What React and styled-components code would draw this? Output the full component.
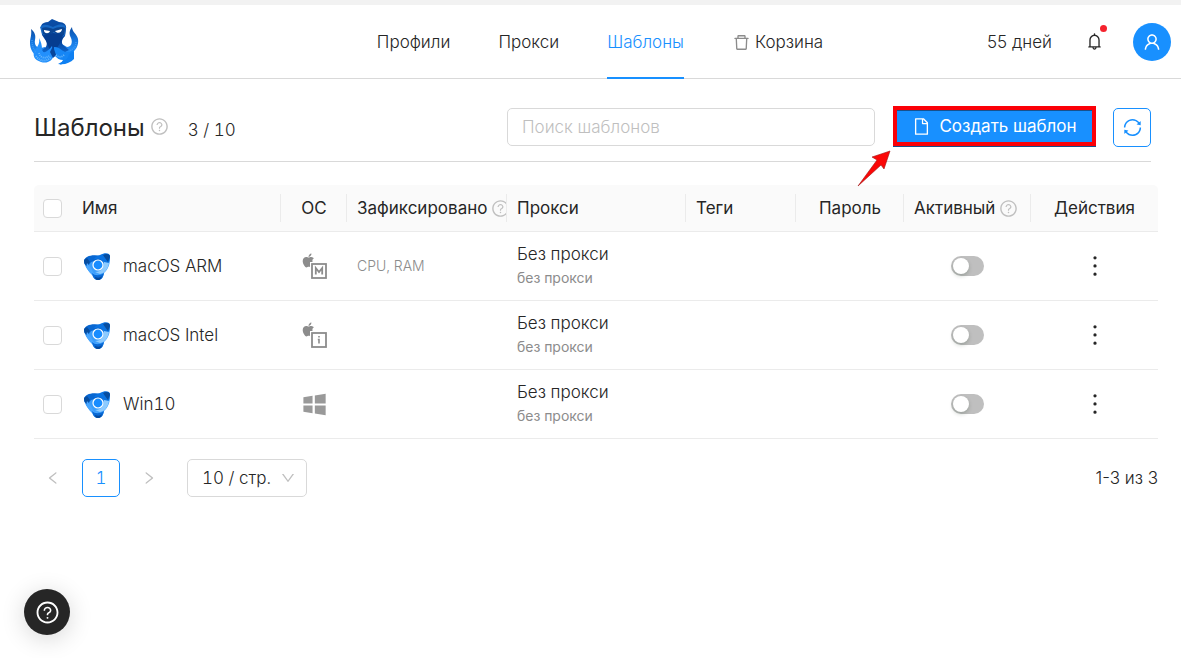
import React, { useState } from 'react';
import styled, { createGlobalStyle, css } from 'styled-components';
import {
  AiOutlineBell,
  AiOutlineDelete,
  AiOutlineDown,
  AiOutlineFile,
  AiOutlineLeft,
  AiOutlineMore,
  AiOutlineQuestionCircle,
  AiOutlineRight,
  AiOutlineSync,
  AiOutlineUser,
  AiFillApple,
  AiFillWindows,
} from 'react-icons/ai';

const GlobalStyle = createGlobalStyle`
  * { box-sizing: border-box; }

  body {
    margin: 0;
    background: #fff;
    color: #262626;
    font-family: Inter, "Liberation Sans", sans-serif;
    font-size: 17px;
    font-weight: 300;
    font-variant-numeric: tabular-nums;
    line-height: 24px;
  }

  button, input, select {
    font: inherit;
    font-variant-numeric: inherit;
    color: inherit;
  }

  button { cursor: pointer; }
  svg { display: block; flex: none; }
`;

const Header = styled.header`
  display: grid;
  grid-template-columns: 1fr auto 1fr;
  align-items: stretch;
  height: 79px;
  padding: 0 10px 0 29px;
  border-top: 5px solid #f2f2f2;
  border-bottom: 1px solid #d9d9d9;
`;

const LogoLink = styled.a`
  display: flex;
  align-items: center;
  justify-self: start;
`;

const Nav = styled.nav`
  display: flex;
  gap: 48px;
`;

const NavLink = styled.a`
  display: flex;
  align-items: center;
  gap: 4px;
  margin-bottom: -1px;
  padding-top: 2px;
  border-bottom: 2px solid transparent;
  color: inherit;
  text-decoration: none;

  svg { color: #8c8c8c; }

  ${props => props.$active && css`
    color: #1890ff;
    border-bottom-color: #1890ff;
  `}
`;

const Account = styled.div`
  display: flex;
  align-items: center;
  justify-self: end;
  font-variant-numeric: normal;
`;

const BellButton = styled.button`
  position: relative;
  display: flex;
  margin: 0 29px 0 33px;
  padding: 0;
  border: 0;
  background: none;

  &::after {
    content: '';
    position: absolute;
    top: -7px;
    right: -3px;
    width: 7px;
    height: 7px;
    border-radius: 50%;
    background: #f5222d;
  }
`;

const Avatar = styled.button`
  display: flex;
  align-items: center;
  justify-content: center;
  width: 38px;
  height: 38px;
  padding: 0;
  border: 0;
  border-radius: 50%;
  background: #1890ff;
  color: #fff;
`;

const Page = styled.main`
  padding: 27px 23px 0 34px;
`;

const Toolbar = styled.div`
  display: flex;
  align-items: center;
  margin-right: 7px;
  padding-bottom: 14px;
  border-bottom: 1px solid #d9d9d9;
`;

const Title = styled.h1`
  margin: 2px 5px 0 0;
  font-size: 24px;
  font-weight: 400;
  line-height: 32px;
`;

const HintIcon = styled(AiOutlineQuestionCircle)`
  width: 19px;
  height: 19px;
  color: #bfbfbf;
`;

const Counter = styled.span`
  margin: 6px auto 0 19px;
`;

const SearchInput = styled.input`
  width: 368px;
  height: 38px;
  margin-right: 18px;
  padding: 0 14px;
  border: 1px solid #d9d9d9;
  border-radius: 5px;
  outline: none;

  &::placeholder { color: #bfbfbf; opacity: 1; }
`;

const Highlight = styled.div`
  position: relative;
  margin: 0 17px 1px 0;
  border: 4px solid #fb0007;
  box-shadow: 0 1px 0 #17508c;
`;

const CreateButton = styled.button`
  display: flex;
  align-items: center;
  justify-content: center;
  gap: 8px;
  width: 195px;
  height: 32px;
  padding: 0;
  border: 0;
  background: #1890ff;
  box-shadow: inset 0 1px 0 #17508c;
  color: #fff;
  font-weight: 400;
`;

const Pointer = styled.svg`
  position: absolute;
  top: 40px;
  left: -42px;
  z-index: 1;
`;

const RefreshButton = styled.button`
  display: flex;
  align-items: center;
  justify-content: center;
  align-self: flex-end;
  width: 38px;
  height: 39px;
  padding: 0;
  border: 1px solid #1890ff;
  border-radius: 5px;
  background: #fff;
  color: #1890ff;
`;

const Table = styled.table`
  width: 100%;
  margin-top: 23px;
  border-collapse: separate;
  border-spacing: 0;
  table-layout: fixed;
`;

const Th = styled.th`
  height: 47px;
  padding: 0;
  border-bottom: 1px solid #ebebeb;
  background: #fafafa;
  font-weight: 400;
  text-align: left;

  &:first-child { border-top-left-radius: 5px; }
  &:last-child { border-top-right-radius: 5px; }
`;

const HeadCell = styled.div`
  display: flex;
  align-items: center;
  justify-content: ${props => (props.$center ? 'center' : 'flex-start')};
  gap: 4px;
  height: 28px;
  padding-left: ${props => (props.$center ? 1 : 10)}px;
  border-right: 1px solid ${props => (props.$divider ? '#ebebeb' : 'transparent')};
  overflow: hidden;
  white-space: nowrap;
`;

const Td = styled.td`
  height: 69px;
  padding: 0 0 0 ${props => (props.$center ? 0 : 10)}px;
  border-bottom: 1px solid #ebebeb;
`;

const Centered = styled.div`
  display: flex;
  justify-content: center;
  color: ${props => props.$color || 'inherit'};
`;

const Checkbox = styled.input`
  appearance: none;
  display: block;
  width: 19px;
  height: 19px;
  margin: 0 0 0 9px;
  border: 1px solid #d9d9d9;
  border-radius: 4px;
  background: #fff;

  &:checked { border-color: #1890ff; background: #1890ff; }
`;

const ProfileName = styled.div`
  display: flex;
  align-items: center;
  gap: 13px;
  padding-left: 2px;
`;

const Muted = styled.div`
  color: #8c8c8c;
  font-size: 14px;
  font-weight: ${props => props.$weight || 300};
  line-height: 24px;
`;

const Switch = styled.input`
  appearance: none;
  display: block;
  width: 33px;
  height: 20px;
  margin: 0;
  padding: 2px;
  border-radius: 10px;
  background: #bfbfbf;

  &::before {
    content: '';
    display: block;
    width: 16px;
    height: 16px;
    border-radius: 50%;
    background: #fff;
    box-shadow: 0 2px 4px rgba(0, 35, 11, 0.2);
  }

  &:checked { background: #1890ff; }
  &:checked::before { margin-left: auto; }
`;

const MoreButton = styled.button`
  display: flex;
  padding: 0;
  border: 0;
  background: none;
`;

const Footer = styled.footer`
  display: flex;
  align-items: center;
  margin-top: 20px;
`;

const PageButton = styled.button`
  display: flex;
  align-items: center;
  justify-content: center;
  width: 38px;
  height: 38px;
  margin-right: 10px;
  padding: 0;
  border: 1px solid ${props => (props.$active ? '#1890ff' : 'transparent')};
  border-radius: 5px;
  background: #fff;
  color: ${props => (props.$active ? '#1890ff' : '#bfbfbf')};
`;

const SelectBox = styled.div`
  position: relative;
  width: 120px;
  margin-left: 9px;

  svg {
    position: absolute;
    top: 11px;
    right: 11px;
    color: #bfbfbf;
    pointer-events: none;
  }
`;

const PageSize = styled.select`
  appearance: none;
  width: 100%;
  height: 38px;
  padding: 0 0 0 14px;
  border: 1px solid #d9d9d9;
  border-radius: 5px;
  background: #fff;
`;

const Total = styled.span`
  margin-left: auto;
  font-variant-numeric: normal;
`;

const HelpButton = styled.button`
  position: fixed;
  bottom: 23px;
  left: 24px;
  display: flex;
  align-items: center;
  justify-content: center;
  width: 46px;
  height: 46px;
  padding: 0;
  border: 0;
  border-radius: 50%;
  background: #262626;
  color: #fff;
  box-shadow: 0 4px 24px rgba(0, 0, 0, 0.16);
`;

function OctopusLogo() {
  return (
    <svg width="50" height="48" viewBox="0 0 50 48" aria-hidden="true">
      <defs>
        <linearGradient id="octoHead" x1="0" y1="0" x2="0" y2="1">
          <stop offset="0" stopColor="#0b4fa8" />
          <stop offset="0.55" stopColor="#053f95" />
          <stop offset="1" stopColor="#1173e0" />
        </linearGradient>
        <linearGradient id="octoArm" x1="0" y1="0" x2="0" y2="1">
          <stop offset="0" stopColor="#0a4da5" />
          <stop offset="0.5" stopColor="#1577e0" />
          <stop offset="1" stopColor="#2b96ff" />
        </linearGradient>
      </defs>
      {/* outer tentacles */}
      <path d="M2 11c4 3 5 7 4 11-1 5 2 8 6 8l4-1 2 9-8 1C4 37 1 31 1 25c0-5 2-8 1-14z" fill="url(#octoArm)" />
      <path d="M43 9c-3 4-3 7-1 11 2 5 0 9-4 9l-7-4-2 10 12 1c6-3 9-9 8-15-1-5-6-7-6-12z" fill="url(#octoArm)" />
      {/* head */}
      <path d="M23 1l7 3c5 0 8 3 7 7l-1 7c-3 3-4 6-2 9l6 5-12 6-5 1-8-3-2-4c4-2 6-5 4-9l-4-6-1-9c1-3 4-4 7-4z" fill="url(#octoHead)" />
      <path d="M11 9c4-4 9-2 13 0 4-2 10-5 13 0l-1 8c-2 3-7 2-11-2-5 3-9 4-12 1z" fill="#1668c4" />
      <path d="M13 10c4-2 9 0 11 1 4-2 9-3 12-1l-1 7c-3 1-7 0-10-3-4 3-8 4-11 2z" fill="#0a4593" />
      <path d="M15 12l6 1c-1 3-5 3-6 0zM26 13l7-2c0 4-5 5-7 2z" fill="#fff" />
      <path d="M15 17l9-2 10 2-3 8-3 5-4 4-4-4z" fill="#053d90" />
      {/* front tentacles */}
      <path d="M10 20c2 4 3 7 3 11 0 5 5 4 10-3l2 8c-1 7-7 10-13 8-7-2-9-7-6-12 3-4 5-7 4-12z" fill="#2390fc" />
      <path d="M25 29c5-1 8 5 13 5 3 0 5-1 7-4l-1 11-13 6 3-5c-7 0-10-6-9-13z" fill="#1686f5" />
      <path d="M24 28l3 9-3 3-3-6z" fill="#07459b" />
      <path d="M29 46c5-3 10-4 11-10l5-3v8c-4 4-9 6-16 5z" fill="#0f80f2" />
      {/* suckers */}
      <path d="M3 22c0 7 2 9 4 13M47 24c0 5-3 8-7 9" fill="none" stroke="#3c9bf6" strokeWidth="1.4" strokeDasharray="1 1" />
      <path d="M7 38c4 6 11 6 15 1M10 35c1 5 6 6 10 3M27 37c3 3 6 2 8 0" fill="none" stroke="#6cb9fc" strokeWidth="1.8" strokeDasharray="1 1" />
    </svg>
  );
}

function BrowserLogo() {
  return (
    <svg width="26" height="27" viewBox="0 0 26 27" aria-hidden="true">
      <path d="M0 7c3-4 9-5 16-4 5-3 10-2 10 1 0 7-1 11-6 16-1 5-3 7-6 7s-5-2-6-6C3 17 0 12 0 7z" fill="#3a9dfb" />
      <path d="M0 8c1-5 8-7 17-5l3 7-6-3-7 2-3 4C1 12 0 11 0 8z" fill="#0867d2" />
      <path d="M0 7c0 3 1 5 3 6l3-4-3-4z" fill="#074d9f" />
      <path d="M16 2c5-3 10-2 10 1 0 4-1 7-3 9l-5-5c-3-2-5-1-8-1 1-2 3-3 6-4z" fill="#0a73e2" />
      <path d="M19 2c4-2 7-1 7 2l-2 5-3-4z" fill="#074d9f" />
      <path d="M3 10c3 4 4 4 7 11l5-1c-2 3-6 4-8 1C3 17 2 13 3 10z" fill="#48a6ff" />
      <path d="M20 9l5 1c-1 6-4 10-9 11l-5-2c6 0 9-4 9-10z" fill="#8dcbff" />
      <path d="M8 20c3 3 8 3 12 0-1 5-3 7-6 7s-5-2-6-7z" fill="#0969d5" />
      <path d="M11 24c3 1 5 1 7-1-1 3-2 4-4 4s-3-1-3-3z" fill="#06499b" />
      <circle cx="14" cy="12" r="5" fill="#188cff" stroke="#fff" strokeWidth="1.2" />
    </svg>
  );
}

function MacIcon({ chip }) {
  return (
    <svg width="25" height="26" viewBox="0 0 25 26" aria-label={`macOS ${chip}`}>
      <AiFillApple x="-2" y="-1" width="18" height="20" color="#8c8c8c" />
      <rect x="8" y="9" width="17" height="17" fill="#fff" />
      <rect x="10" y="11" width="14" height="14" fill="none" stroke="#8c8c8c" strokeWidth="1.8" />
      {chip === 'ARM' ? (
        <path d="M13.8 21.5v-6.5l3.2 4 3.2-4v6.5" fill="none" stroke="#8c8c8c" strokeWidth="1.8" />
      ) : (
        <path d="M17 14v1.6M15.8 17.5H17v4" fill="none" stroke="#8c8c8c" strokeWidth="1.6" />
      )}
    </svg>
  );
}

const columns = [
  { title: 'Имя', divider: true },
  { title: 'ОС', width: 66, center: true, divider: true },
  { title: 'Зафиксировано', width: 160, hint: true, divider: true },
  { title: 'Прокси', width: 179, divider: true },
  { title: 'Теги', width: 110, divider: true },
  { title: 'Пароль', width: 108, center: true, divider: true },
  { title: 'Активный', width: 127, hint: true, divider: true },
  { title: 'Действия', width: 127, center: true },
];

const templates = [
  { name: 'macOS ARM', os: <MacIcon chip="ARM" />, locked: 'CPU, RAM' },
  { name: 'macOS Intel', os: <MacIcon chip="Intel" />, locked: '' },
  { name: 'Win10', os: <AiFillWindows size={29} />, locked: '' },
];

function TemplateRow({ template }) {
  const [active, setActive] = useState(false);

  return (
    <tr>
      <Td $center>
        <Checkbox type="checkbox" aria-label={template.name} />
      </Td>
      <Td>
        <ProfileName>
          <BrowserLogo />
          {template.name}
        </ProfileName>
      </Td>
      <Td $center>
        <Centered $color="#999">{template.os}</Centered>
      </Td>
      <Td><Muted>{template.locked}</Muted></Td>
      <Td>
        Без прокси
        <Muted $weight={400}>без прокси</Muted>
      </Td>
      <Td />
      <Td />
      <Td $center>
        <Centered>
          <Switch
            type="checkbox"
            role="switch"
            aria-label={`Активный: ${template.name}`}
            checked={active}
            onChange={e => setActive(e.target.checked)}
          />
        </Centered>
      </Td>
      <Td $center>
        <Centered>
          <MoreButton type="button" aria-label="Действия">
            <AiOutlineMore size={30} />
          </MoreButton>
        </Centered>
      </Td>
    </tr>
  );
}

export default function App() {
  return (
    <>
      <GlobalStyle />
      <Header>
        <LogoLink href="#" aria-label="Главная"><OctopusLogo /></LogoLink>
        <Nav>
          <NavLink href="#profiles">Профили</NavLink>
          <NavLink href="#proxy">Прокси</NavLink>
          <NavLink href="#templates" $active>Шаблоны</NavLink>
          <NavLink href="#trash"><AiOutlineDelete size={19} />Корзина</NavLink>
        </Nav>
        <Account>
          <span>55 дней</span>
          <BellButton type="button" aria-label="Уведомления">
            <AiOutlineBell size={19} />
          </BellButton>
          <Avatar type="button" aria-label="Профиль">
            <AiOutlineUser size={20} />
          </Avatar>
        </Account>
      </Header>

      <Page>
        <Toolbar>
          <Title>Шаблоны</Title>
          <HintIcon />
          <Counter>3 / 10</Counter>
          <SearchInput type="search" placeholder="Поиск шаблонов" aria-label="Поиск шаблонов" />
          <Highlight>
            <CreateButton type="button">
              <AiOutlineFile size={19} />
              Создать шаблон
            </CreateButton>
            <Pointer width="36" height="38" viewBox="0 0 36 38" aria-hidden="true">
              <path d="M3 36L22 10L17 7L35 1L29 19L26 15Z" fill="#fb0707" stroke="#a01515" strokeWidth="0.6" />
            </Pointer>
          </Highlight>
          <RefreshButton type="button" aria-label="Обновить">
            <AiOutlineSync size={21} />
          </RefreshButton>
        </Toolbar>

        <Table>
          <colgroup>
            <col width="38" />
            {columns.map(col => <col key={col.title} width={col.width} />)}
          </colgroup>
          <thead>
            <tr>
              <Th><Checkbox type="checkbox" aria-label="Выбрать все" /></Th>
              {columns.map(col => (
                <Th key={col.title} scope="col">
                  <HeadCell $center={col.center} $divider={col.divider}>
                    {col.title}
                    {col.hint && <HintIcon />}
                  </HeadCell>
                </Th>
              ))}
            </tr>
          </thead>
          <tbody>
            {templates.map(template => <TemplateRow key={template.name} template={template} />)}
          </tbody>
        </Table>

        <Footer>
          <PageButton type="button" aria-label="Назад"><AiOutlineLeft size={16} /></PageButton>
          <PageButton type="button" $active>1</PageButton>
          <PageButton type="button" aria-label="Вперёд"><AiOutlineRight size={16} /></PageButton>
          <SelectBox>
            <PageSize aria-label="Строк на странице" defaultValue="10">
              <option value="10">10 / стр.</option>
              <option value="20">20 / стр.</option>
              <option value="50">50 / стр.</option>
            </PageSize>
            <AiOutlineDown size={16} />
          </SelectBox>
          <Total>1-3 из 3</Total>
        </Footer>
      </Page>

      <HelpButton type="button" aria-label="Помощь">
        <AiOutlineQuestionCircle size={25} />
      </HelpButton>
    </>
  );
}
